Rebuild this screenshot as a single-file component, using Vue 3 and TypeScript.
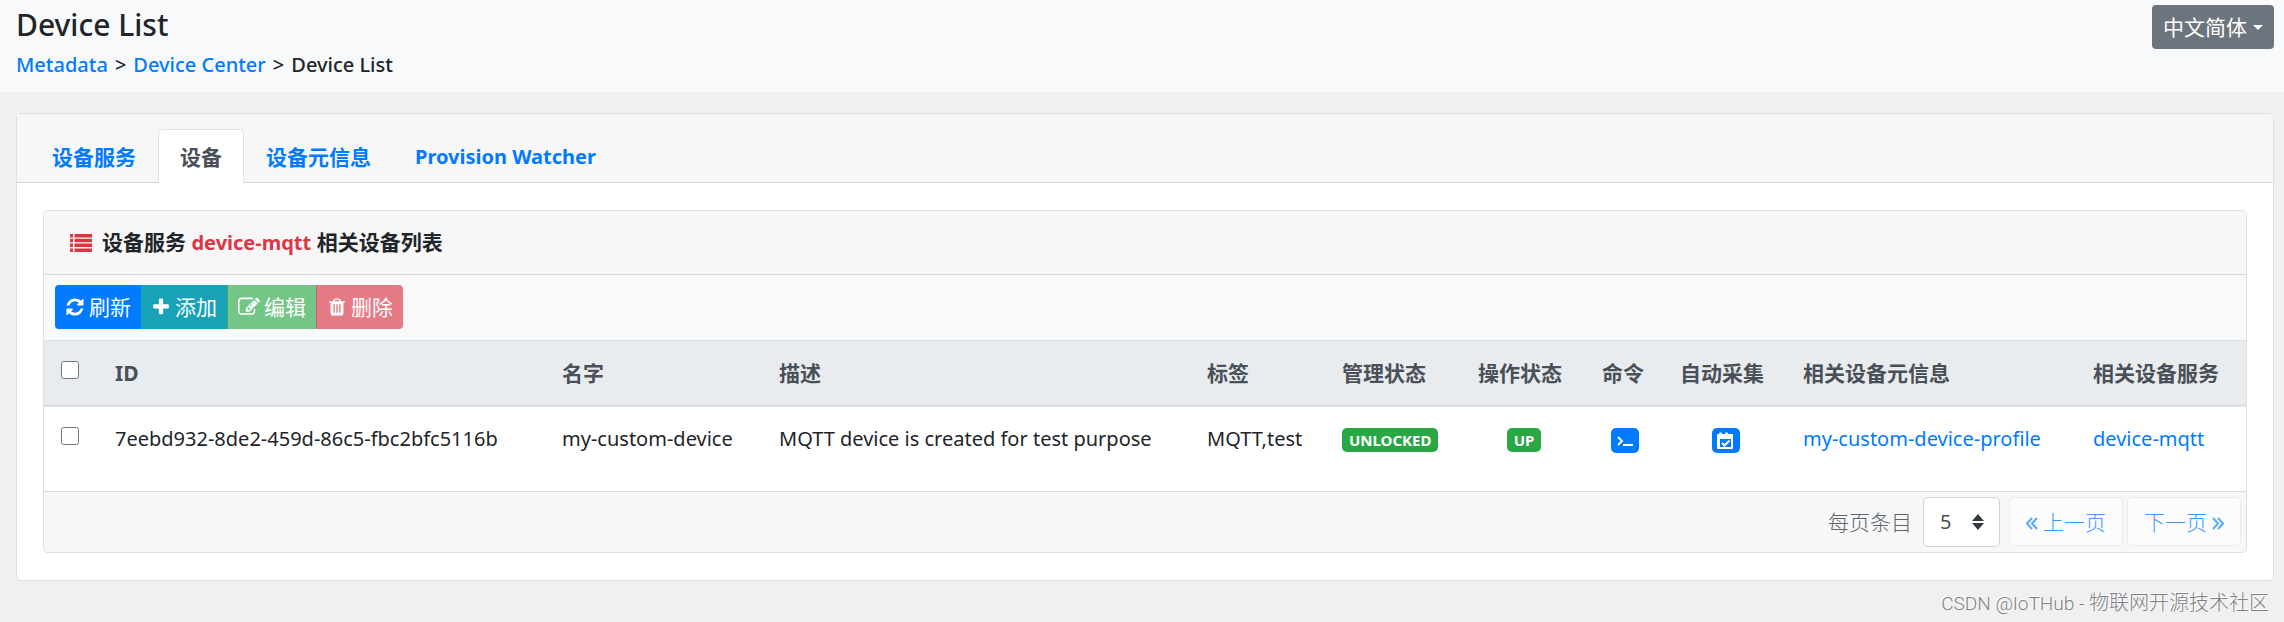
<script setup lang="ts">
import { ref } from 'vue'

interface Device {
  id: string
  name: string
  description: string
  labels: string[]
  adminState: string
  operatingState: string
  profile: string
  service: string
}

interface Action {
  key: string
  label: string
  icon: string
  disabled: boolean
}

const tabs = [
  { label: '设备服务', latin: false },
  { label: '设备', latin: false },
  { label: '设备元信息', latin: false },
  { label: 'Provision Watcher', latin: true },
]
const activeTab = ref('设备')

const actions: Action[] = [
  {
    key: 'refresh',
    label: '刷新',
    disabled: false,
    icon: 'M1639 1056q0 5-1 7-64 268-268 434.5t-478 166.5q-146 0-282.5-55t-243.5-157l-129 129q-19 19-45 19t-45-19-19-45v-448q0-26 19-45t45-19h448q26 0 45 19t19 45-19 45l-137 137q71 66 161 102t187 36q134 0 250-65t186-179q11-17 53-117 8-23 30-23h192q13 0 22.5 9.5t9.5 22.5zm25-800v448q0 26-19 45t-45 19h-448q-26 0-45-19t-19-45 19-45l138-138q-148-137-349-137-134 0-250 65t-186 179q-11 17-53 117-8 23-30 23h-199q-13 0-22.5-9.5t-9.5-22.5v-7q65-268 270-434.5t480-166.5q146 0 284 55.5t245 156.5l130-129q19-19 45-19t45 19 19 45z',
  },
  {
    key: 'add',
    label: '添加',
    disabled: false,
    icon: 'M1600 736v192q0 40-28 68t-68 28h-416v416q0 40-28 68t-68 28h-192q-40 0-68-28t-28-68v-416h-416q-40 0-68-28t-28-68v-192q0-40 28-68t68-28h416v-416q0-40 28-68t68-28h192q40 0 68 28t28 68v416h416q40 0 68 28t28 68z',
  },
  {
    key: 'edit',
    label: '编辑',
    disabled: true,
    icon: 'M888 1184l116-116-152-152-116 116v56h96v96h56zm440-720q-16-16-33 1l-350 350q-17 17-1 33t33-1l350-350q17-17 1-33zm80 594v190q0 119-84.5 203.5t-203.5 84.5h-832q-119 0-203.5-84.5t-84.5-203.5v-832q0-119 84.5-203.5t203.5-84.5h832q63 0 117 25 15 7 18 23 3 17-9 29l-49 49q-14 14-32 8-23-6-45-6h-832q-66 0-113 47t-47 113v832q0 66 47 113t113 47h832q66 0 113-47t47-113v-126q0-13 9-22l64-64q15-15 35-7t20 29zm-96-738l288 288-672 672h-288v-288zm444 132l-92 92-288-288 92-92q28-28 68-28t68 28l152 152q28 28 28 68t-28 68z',
  },
  {
    key: 'remove',
    label: '删除',
    disabled: true,
    icon: 'M704 1376v-704q0-14-9-23t-23-9h-64q-14 0-23 9t-9 23v704q0 14 9 23t23 9h64q14 0 23-9t9-23zm256 0v-704q0-14-9-23t-23-9h-64q-14 0-23 9t-9 23v704q0 14 9 23t23 9h64q14 0 23-9t9-23zm256 0v-704q0-14-9-23t-23-9h-64q-14 0-23 9t-9 23v704q0 14 9 23t23 9h64q14 0 23-9t9-23zm-544-992h448l-48-117q-7-9-17-11h-317q-10 2-17 11zm928 32v64q0 14-9 23t-23 9h-96v948q0 83-47 143.5t-113 60.5h-832q-66 0-113-58.5t-47-141.5v-952h-96q-14 0-23-9t-9-23v-64q0-14 9-23t23-9h309l70-167q15-37 54-63t79-26h320q40 0 79 26t54 63l70 167h309q14 0 23 9t9 23z',
  },
]

const devices: Device[] = [
  {
    id: '7eebd932-8de2-459d-86c5-fbc2bfc5116b',
    name: 'my-custom-device',
    description: 'MQTT device is created for test purpose',
    labels: ['MQTT', 'test'],
    adminState: 'UNLOCKED',
    operatingState: 'UP',
    profile: 'my-custom-device-profile',
    service: 'device-mqtt',
  },
]

const selected = ref<string[]>([])
const pageSize = ref(5)

function toggleAll(event: Event) {
  const on = (event.target as HTMLInputElement).checked
  selected.value = on ? devices.map((d) => d.id) : []
}
</script>

<template>
  <div class="page">
    <header class="topbar">
      <div>
        <h1>Device List</h1>
        <nav class="crumbs" aria-label="Breadcrumb">
          <a href="#metadata">Metadata</a>
          <span class="sep">&gt;</span>
          <a href="#device-center">Device Center</a>
          <span class="sep">&gt;</span>
          <span>Device List</span>
        </nav>
      </div>
      <button type="button" class="lang">中文简体<span class="caret"></span></button>
    </header>

    <main class="card">
      <nav class="tabs">
        <a
          v-for="tab in tabs"
          :key="tab.label"
          href="#tab"
          :class="{ active: tab.label === activeTab, latin: tab.latin }"
          @click.prevent="activeTab = tab.label"
          >{{ tab.label }}</a
        >
      </nav>

      <section class="panel">
        <h2 class="panel-head">
          <svg class="list-icon" viewBox="0 0 22 18" aria-hidden="true">
            <path
              d="M0 0h3v3.500H0zM4.500 0H22v3.500H4.500zM0 4.800h3v3.500H0zM4.500 4.800H22v3.500H4.500zM0 9.600h3v3.500H0zM4.500 9.600H22v3.500H4.500zM0 14.400h3v3.500H0zM4.500 14.400H22v3.500H4.500z"
            />
          </svg>
          <span>设备服务 <em>device-mqtt</em> 相关设备列表</span>
        </h2>

        <div class="toolbar">
          <button
            v-for="a in actions"
            :key="a.key"
            type="button"
            :class="['action', a.key]"
            :disabled="a.disabled"
          >
            <svg viewBox="0 0 1792 1792" aria-hidden="true"><path :d="a.icon" /></svg>
            <span>{{ a.label }}</span>
          </button>
        </div>

        <table>
          <colgroup>
            <col class="w-check" />
            <col class="w-id" />
            <col class="w-name" />
            <col class="w-desc" />
            <col class="w-tags" />
            <col class="w-admin" />
            <col class="w-op" />
            <col class="w-cmd" />
            <col class="w-auto" />
            <col class="w-profile" />
            <col class="w-service" />
          </colgroup>
          <thead>
            <tr>
              <th><input type="checkbox" aria-label="全选" @change="toggleAll" /></th>
              <th>ID</th>
              <th>名字</th>
              <th>描述</th>
              <th>标签</th>
              <th>管理状态</th>
              <th>操作状态</th>
              <th>命令</th>
              <th>自动采集</th>
              <th>相关设备元信息</th>
              <th>相关设备服务</th>
            </tr>
          </thead>
          <tbody>
            <tr v-for="d in devices" :key="d.id">
              <td><input v-model="selected" type="checkbox" :value="d.id" :aria-label="d.name" /></td>
              <td>{{ d.id }}</td>
              <td>{{ d.name }}</td>
              <td>{{ d.description }}</td>
              <td>{{ d.labels.join(',') }}</td>
              <td><span class="badge">{{ d.adminState }}</span></td>
              <td class="center"><span class="badge">{{ d.operatingState }}</span></td>
              <td class="center">
                <button type="button" class="icon-btn" aria-label="命令">
                  <svg viewBox="0 0 28 25" aria-hidden="true">
                    <path class="stroke" d="M7 9l4 4-4 4M12 17h10" />
                  </svg>
                </button>
              </td>
              <td class="center">
                <button type="button" class="icon-btn" aria-label="自动采集">
                  <svg viewBox="0 0 28 25" aria-hidden="true">
                    <path
                      fill-rule="evenodd"
                      d="M6 6h1V5.500q1.500-2.500 3 0V6h3V5.500q1.500-2.500 3 0V6h4q1 0 1 1v13q0 1-1 1H6q-1 0-1-1V7q0-1 1-1zM8 11v8h11v-8z"
                    />
                    <path class="stroke" d="M10 15l2.500 2.500 5-5" />
                  </svg>
                </button>
              </td>
              <td><a href="#profile">{{ d.profile }}</a></td>
              <td><a href="#service">{{ d.service }}</a></td>
            </tr>
          </tbody>
        </table>

        <footer class="pager">
          <label for="page-size">每页条目</label>
          <span class="select-wrap">
            <select id="page-size" v-model="pageSize">
              <option :value="5">5</option>
              <option :value="10">10</option>
              <option :value="20">20</option>
            </select>
            <svg viewBox="0 0 12 16" aria-hidden="true"><path d="M6 0l6 7H0zM0 9h12l-6 7z" /></svg>
          </span>
          <button type="button" class="page-btn" disabled>
            <svg viewBox="0 0 12 16" aria-hidden="true"><path d="M6 4L1 9.500l5 5.500M11 4L6 9.500l5 5.500" /></svg>
            <span>上一页</span>
          </button>
          <button type="button" class="page-btn next" disabled>
            <span>下一页</span>
            <svg viewBox="0 0 12 16" aria-hidden="true"><path d="M1 4l5 5.500L1 15M6 4l5 5.500L6 15" /></svg>
          </button>
        </footer>
      </section>
    </main>
    <div class="credit"><span class="handle">CSDN @IoTHub - </span>物联网开源技术社区</div>
  </div>
</template>

<style>
body {
  margin: 0;
  background: #f0f0f2;
}
</style>

<style scoped>
.page {
  min-height: 100vh;
  box-sizing: border-box;
  font-family: 'Noto Sans', 'Noto Sans CJK SC', sans-serif;
  font-size: 20px;
  line-height: 32px;
  color: #212529;
}
.page *,
.page *::before {
  box-sizing: border-box;
}
a {
  color: #007bff;
  text-decoration: none;
}
button,
select {
  font: inherit;
}
.topbar {
  display: flex;
  justify-content: space-between;
  align-items: flex-start;
  height: 92px;
  padding: 5px 10px 0 16px;
  background: #f8f9fb;
}
h1 {
  margin: 0;
  font-size: 30px;
  font-weight: 500;
  line-height: 40px;
}
.crumbs {
  display: flex;
  gap: 7px;
  line-height: 40px;
  font-weight: 500;
}
.lang {
  display: flex;
  align-items: center;
  gap: 6px;
  height: 44px;
  padding: 0 11px;
  border: 0;
  border-radius: 4px;
  background: #6c757d;
  color: #fff;
  font-size: 21px;
}
.caret {
  border: 5px solid transparent;
  border-top-color: #fff;
  border-bottom: 0;
}
.card {
  margin: 21px 10px 0 16px;
  border: 1px solid #dfdfdf;
  border-radius: 5px;
  background: #fff;
}
.tabs {
  display: flex;
  padding: 15px 13px 0;
  border-bottom: 1px solid #d6d7d8;
  background: #f7f7f7;
  font-size: 21px;
  font-weight: 700;
}
.tabs a {
  height: 54px;
  margin-bottom: -1px;
  padding: 11px 21px;
  border: 1px solid transparent;
  border-bottom: 0;
  border-radius: 5px 5px 0 0;
}
.tabs a.latin {
  font-size: 20px;
}
.tabs a.active {
  border-color: #dee2e6;
  background: #fff;
  color: #495057;
}
.panel {
  margin: 27px 26px;
  border: 1px solid #dfdfdf;
  border-radius: 5px;
  overflow: hidden;
}
.panel-head {
  display: flex;
  align-items: center;
  gap: 10px;
  height: 64px;
  margin: 0;
  padding: 0 26px;
  border-bottom: 1px solid #d6d7d8;
  background: #f7f7f7;
  font-size: 21px;
  font-weight: 700;
}
.panel-head em {
  font-size: 20px;
  font-style: normal;
  color: #dc3545;
}
.list-icon {
  width: 22px;
  height: 18px;
  fill: #dc3545;
}
.toolbar {
  display: flex;
  padding: 10px 11px 11px;
  background: #f8f9fb;
}
.action {
  display: flex;
  align-items: center;
  gap: 4px;
  height: 44px;
  padding: 0 10px;
  border: 0;
  color: #fff;
  font-size: 21px;
}
.action svg {
  width: 20px;
  height: 20px;
  fill: #fff;
}
.action.refresh {
  border-radius: 4px 0 0 4px;
  background: #007bff;
}
.action.add {
  background: #17a2b8;
}
.action.edit {
  border-left: 1px solid #3fad6c;
  background: #74c686;
}
.action.edit svg {
  width: 22px;
  height: 22px;
}
.action.remove {
  border-left: 1px solid #c9606a;
  border-radius: 0 4px 4px 0;
  background: #e67a84;
}
table {
  width: 100%;
  table-layout: fixed;
  border-collapse: collapse;
}
.w-check { width: 55px; }
.w-id { width: 447px; }
.w-name { width: 217px; }
.w-desc { width: 428px; }
.w-tags { width: 135px; }
.w-admin { width: 136px; }
.w-op { width: 124px; }
.w-cmd { width: 78px; }
.w-auto { width: 123px; }
.w-profile { width: 290px; }
.w-service { width: 170px; }
th,
td {
  padding: 16px;
  text-align: left;
  vertical-align: top;
  white-space: nowrap;
}
th {
  padding-bottom: 15px;
  border-top: 1px solid #dee2e6;
  border-bottom: 3px solid #dee2e6;
  background: #e9ecef;
  color: #495057;
  font-size: 21px;
}
td {
  height: 85px;
}
.center {
  text-align: center;
}
th input,
td input {
  display: block;
  width: 18px;
  height: 18px;
  margin: 4px 0 0 1px;
}
.badge {
  display: inline-block;
  padding: 0 7px;
  border-radius: 5px;
  background: #28a745;
  color: #fff;
  font-size: 15px;
  font-weight: 700;
  line-height: 24px;
}
.icon-btn {
  display: inline-block;
  width: 28px;
  height: 25px;
  padding: 0;
  border: 0;
  border-radius: 5px;
  background: #007bff;
  vertical-align: middle;
}
.icon-btn svg {
  display: block;
  width: 28px;
  height: 25px;
  fill: #fff;
}
.icon-btn .stroke {
  fill: none;
  stroke: #fff;
  stroke-width: 2;
}
.pager {
  display: flex;
  justify-content: flex-end;
  align-items: center;
  height: 61px;
  padding: 0 5px;
  border-top: 1px solid #d6d7d8;
  background: #f7f7f7;
  font-size: 21px;
  font-weight: 300;
}
.pager label {
  margin-right: 11px;
  color: #5c656d;
}
.select-wrap {
  position: relative;
  margin-right: 9px;
}
.select-wrap select {
  display: block;
  width: 77px;
  height: 50px;
  padding: 0 16px;
  appearance: none;
  border: 1px solid #ced4da;
  border-radius: 5px;
  background: #fff;
  color: #495057;
  font-size: 20px;
  font-weight: 400;
}
.select-wrap svg {
  position: absolute;
  top: 17px;
  right: 16px;
  width: 12px;
  height: 16px;
  fill: #343a40;
  pointer-events: none;
}
.page-btn {
  display: flex;
  align-items: center;
  gap: 5px;
  height: 49px;
  padding: 0 16px;
  border: 1px solid #e9ebed;
  border-radius: 5px;
  background: #fcfcfc;
  color: #3d9aff;
}
.page-btn.next {
  margin-left: 4px;
}
.page-btn svg {
  width: 12px;
  height: 16px;
  fill: none;
  stroke: #59a9ff;
  stroke-width: 2;
}
.credit {
  padding: 6px 15px 0;
  font-family: Roboto, 'Noto Sans CJK SC', sans-serif;
  font-weight: 300;
  text-align: right;
  color: #808080;
  text-shadow: -1px -1px 0 #fff;
}
.handle {
  font-size: 19px;
}
</style>
